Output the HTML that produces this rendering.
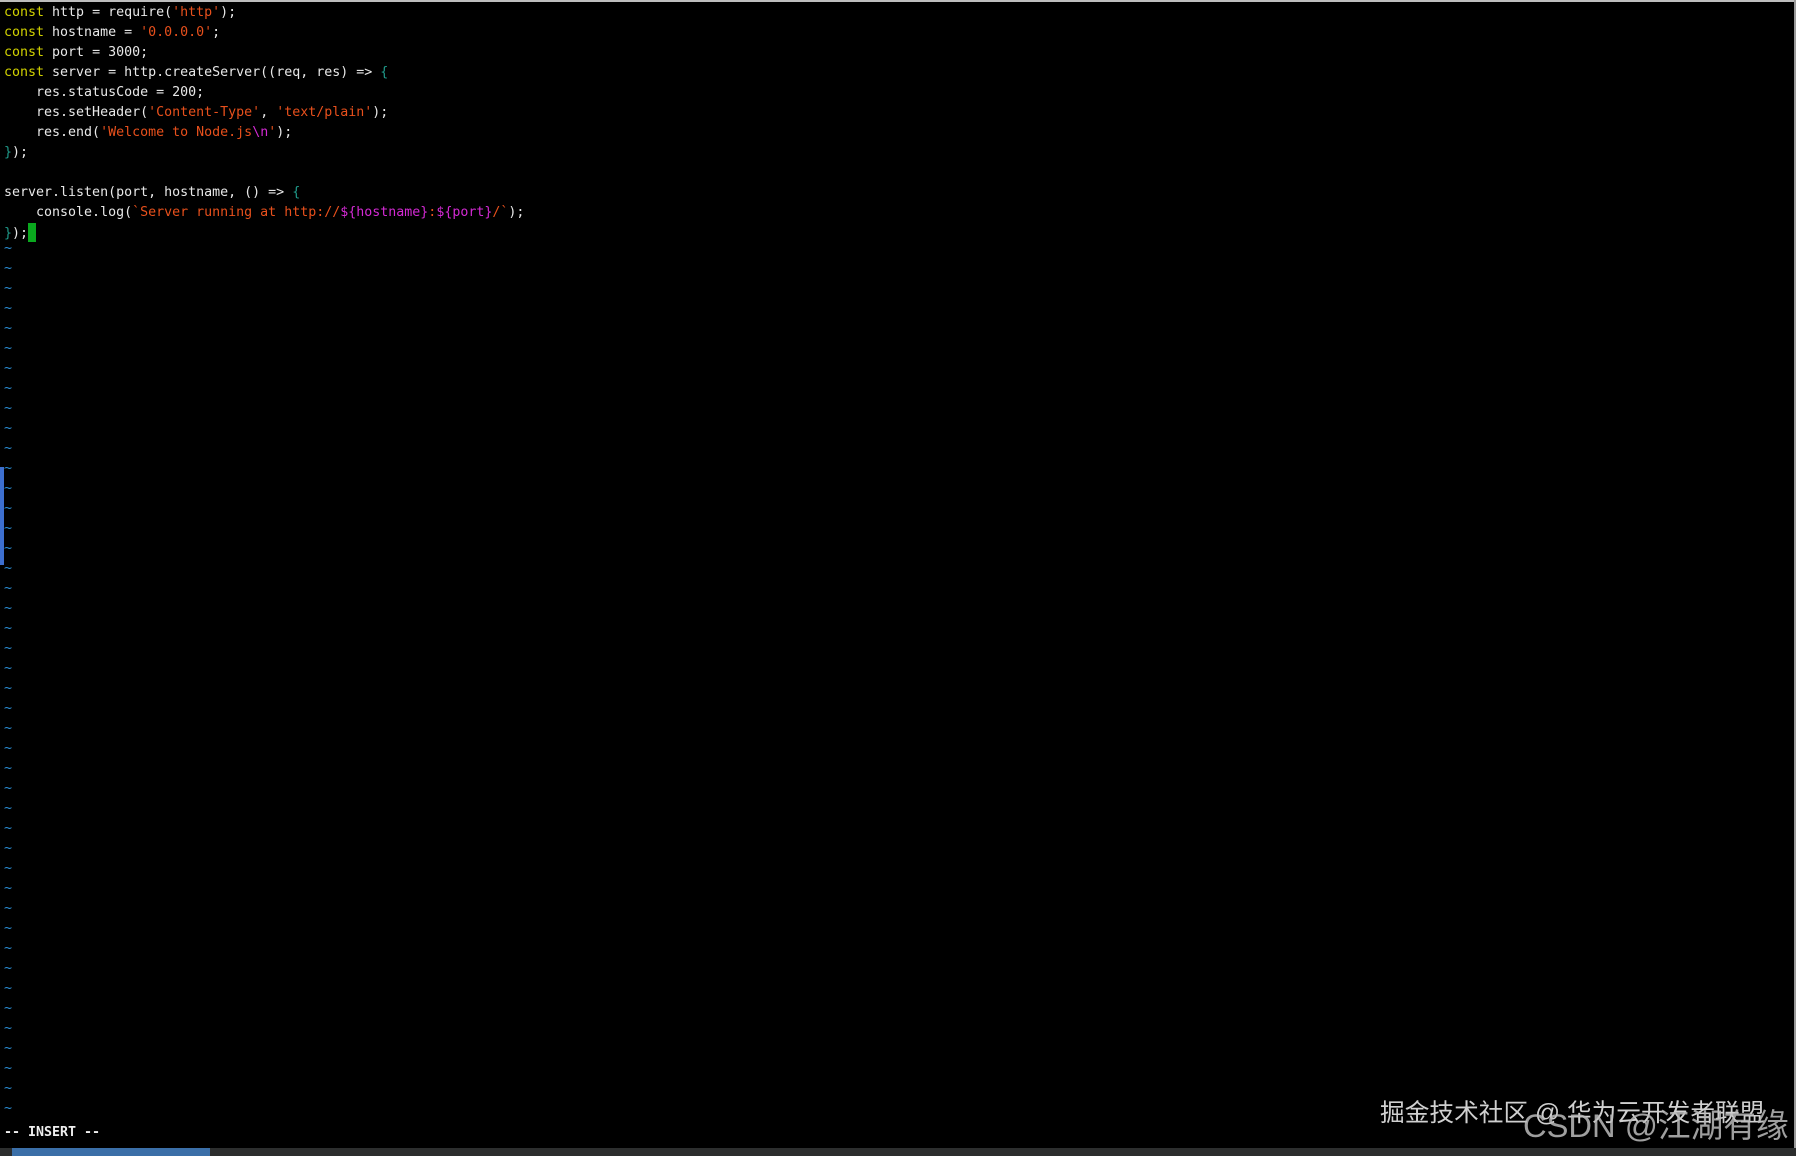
<!DOCTYPE html>
<html><head><meta charset="utf-8"><style>
html,body{margin:0;padding:0;}
body{width:1796px;height:1156px;background:#000;position:relative;overflow:hidden;}
.top{position:absolute;left:0;top:0;width:1796px;height:2px;background:#bdbdbd;}
.right{position:absolute;right:0;top:0;width:2px;height:1156px;background:#9a9a9a;}
pre{position:absolute;left:4px;top:3px;margin:0;font-family:"DejaVu Sans Mono","Liberation Mono",monospace;font-size:13.3px;line-height:20px;color:#e8e8e8;}
.k{color:#d2d200}.s{color:#e8501c}.m{color:#d42ad4}.b{color:#1f9a8a}.t{color:#2a8fd8;position:relative;top:-5px;}
.cur{display:inline-block;width:8px;height:19px;background:#0aa81e;vertical-align:-5px;}
.hl{position:absolute;left:0;top:467px;width:4px;height:98px;background:#3d6fd0;}
.ins{position:absolute;left:4px;top:1125px;font-family:"DejaVu Sans Mono",monospace;font-size:13.3px;font-weight:bold;color:#eee;}
.bar{position:absolute;left:0;top:1148px;width:1796px;height:8px;background:#2c2e2e;}
.bar i{position:absolute;left:12px;top:0;width:198px;height:8px;background:#3b6fa8;}
.w1{position:absolute;left:1380px;top:1093px;font-family:"Liberation Sans","Noto Sans CJK SC",sans-serif;font-size:24.7px;color:#d0d0d0;white-space:nowrap;}
.w2{position:absolute;left:1523px;top:1100px;font-family:"Liberation Sans","Noto Sans CJK SC",sans-serif;font-size:32.7px;color:#bbb;white-space:nowrap;opacity:.85;}
</style></head><body>
<div class="top"></div><div class="right"></div>
<pre><span class="k">const</span> http = require(<span class="s">'http'</span>);
<span class="k">const</span> hostname = <span class="s">'0.0.0.0'</span>;
<span class="k">const</span> port = 3000;
<span class="k">const</span> server = http.createServer((req, res) =&gt; <span class="b">{</span>
    res.statusCode = 200;
    res.setHeader(<span class="s">'Content-Type'</span>, <span class="s">'text/plain'</span>);
    res.end(<span class="s">'Welcome to Node.js<span class="m">\n</span>'</span>);
<span class="b">}</span>);

server.listen(port, hostname, () =&gt; <span class="b">{</span>
    console.log(<span class="s">`Server running at http://<span class="m">${hostname}</span>:<span class="m">${port}</span>/`</span>);
<span class="b">}</span>);<span class="cur"></span>
<span class="t">~
~
~
~
~
~
~
~
~
~
~
~
~
~
~
~
~
~
~
~
~
~
~
~
~
~
~
~
~
~
~
~
~
~
~
~
~
~
~
~
~
~
~
~</span></pre>
<div class="hl"></div>
<div class="ins">-- INSERT --</div>
<div class="w1">掘金技术社区 @ 华为云开发者联盟</div>
<div class="w2">CSDN @江湖有缘</div>
<div class="bar"><i></i></div>
</body></html>
